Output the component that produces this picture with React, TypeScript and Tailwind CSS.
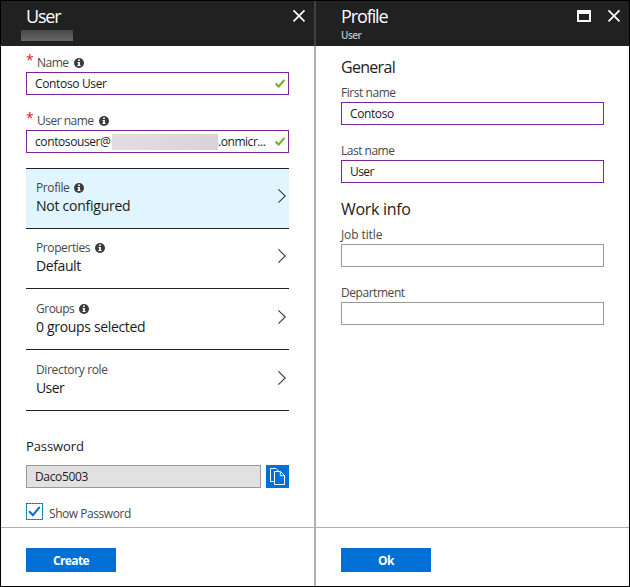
import type { ReactNode } from "react";

function Info() {
  return (
    <svg width="10" height="10" viewBox="0 0 10 10" className="shrink-0">
      <circle cx="5" cy="5" r="5" fill="#3b3b3b" />
      <path d="M4.1 1.6h1.8v1.5H4.1zM3.5 4h2.4v3.1h.7v1H3.4v-1h.7V5h-.6z" fill="#fff" />
    </svg>
  );
}

function Close() {
  return (
    <svg width="14" height="14" viewBox="0 0 14 14" className="block">
      <path d="M1.5 2.3l11 11M12.5 2.3l-11 11" stroke="#fff" strokeWidth="1.7" fill="none" />
    </svg>
  );
}

function Maximize() {
  return (
    <svg width="14" height="12" viewBox="0 0 14 12" className="block">
      <path d="M0 0h14v12H0zM2 4v6h10V4z" fill="#fff" fillRule="evenodd" />
    </svg>
  );
}

function Valid() {
  return (
    <svg width="10" height="9" viewBox="0 0 10 9" className="ml-auto shrink-0">
      <path d="M.7 4.6l3 3L9.3.9" stroke="#76b41b" strokeWidth="2.1" fill="none" />
    </svg>
  );
}

function Chevron() {
  return (
    <svg width="8" height="14" viewBox="0 0 8 14" className="shrink-0">
      <path d="M.4.4L7.3 7 .4 13.6" stroke="#333" strokeWidth="1.1" fill="none" />
    </svg>
  );
}

function CopyIcon() {
  return (
    <svg width="17" height="19" viewBox="0 0 17 19">
      <path d="M5 14.5H1.5v-13h5.5l3 3" stroke="#fff" strokeWidth="1" fill="none" />
      <path d="M5.5 4.5h6l4 4v9h-10z" stroke="#fff" strokeWidth="1" fill="#006fd6" />
      <path d="M11.3 4.5v4.2h4.2" stroke="#fff" strokeWidth="1" fill="none" />
    </svg>
  );
}

function Label({ children, info, required, tracking }: { children: ReactNode; info?: boolean; required?: boolean; tracking: string }) {
  return (
    <div className="flex h-4 items-center text-[12px] leading-4 text-[#484848]">
      {required && <span className="w-[11px] pb-[6px] text-[14px] leading-4 text-[#e81123]">*</span>}
      <span className={tracking}>{children}</span>
      {info && <span className="ml-[5px]"><Info /></span>}
    </div>
  );
}

function Field({ children, filled }: { children?: ReactNode; filled?: boolean }) {
  return (
    <div className={`flex h-[23px] w-[263px] items-center border bg-white pr-[3px] pl-2 text-[12px] text-[#1b1b1b] ${filled ? "border-[#7b259b]" : "border-[#999]"}`}>
      {children}
    </div>
  );
}

function Row({ label, value, info, selected, height, lt, vt }: { label: string; value: string; info?: boolean; selected?: boolean; height: string; lt: string; vt: string }) {
  return (
    <div className={`flex items-start border-b border-[#222] pr-[3px] pl-[10px] ${height} ${selected ? "bg-[#e0f5fd]" : ""}`}>
      <div className="flex flex-1 flex-col">
        <Label info={info} tracking={lt}>{label}</Label>
        <div className={`h-5 text-[14px] leading-5 text-[#1b1b1b] ${vt}`}>{value}</div>
      </div>
      <div className="pt-[9px]"><Chevron /></div>
    </div>
  );
}

function Footer({ children }: { children: string }) {
  return (
    <div className="mt-auto h-[59px] border-t border-[#b0b0b0] pt-5 pl-[25px]">
      <button className="block h-6 w-[90px] bg-[#006fd6] text-[12px] leading-[26px] font-bold tracking-[-0.6px] text-white">{children}</button>
    </div>
  );
}

export default function App() {
  return (
    <div className="flex h-[587px] w-[630px] overflow-hidden border border-black bg-white font-['Open_Sans','Noto_Sans',sans-serif]">
      <section className="flex w-[313px] flex-col">
        <header className="flex h-[45px] justify-between bg-[#212121] pr-2 pl-[25px] text-white">
          <div className="pt-[3px]">
            <h1 className="h-6 text-[18px] leading-6 tracking-[-1.2px]">User</h1>
            <div className="mt-[2px] -ml-[5px] h-[11px] w-[52px] bg-gradient-to-b from-[#484848] to-[#676767]" />
          </div>
          <div className="pt-[7px]"><Close /></div>
        </header>
        <div className="w-[288px] pl-[25px]">
          <div className="mt-[9px]"><Label info required tracking="tracking-[-0.5px]">Name</Label></div>
          <div className="mt-[1px]"><Field filled><span className="tracking-[-0.35px]">Contoso User</span><Valid /></Field></div>
          <div className="mt-[18px]"><Label info required tracking="tracking-[-0.5px]">User name</Label></div>
          <div className="mt-[1px]">
            <Field filled>
              <span className="w-[77px] tracking-[-0.4px]">contosouser@</span>
              <span className="h-4 w-[106px] bg-gradient-to-r from-[#e2dfe4] to-[#d7d3d9]" />
              <span className="tracking-[-0.45px]">.onmicr...</span>
              <Valid />
            </Field>
          </div>
          <div className="mt-[15px] border-t border-[#222]">
            <Row label="Profile" value="Not configured" info selected height="h-[60px] pt-[11px]" lt="tracking-[-0.4px]" vt="tracking-[-0.25px]" />
            <Row label="Properties" value="Default" info height="h-[60px] pt-[11px]" lt="tracking-[-0.4px]" vt="tracking-[-0.4px]" />
            <Row label="Groups" value="0 groups selected" info height="h-[61px] pt-[12px]" lt="tracking-[-0.5px]" vt="tracking-[-0.33px]" />
            <Row label="Directory role" value="User" height="h-[61px] pt-[12px]" lt="tracking-[-0.35px]" vt="tracking-[-0.6px]" />
          </div>
          <div className="mt-[25px] h-5 text-[13px] leading-5 tracking-[-0.1px] text-[#1b1b1b]">Password</div>
          <div className="mt-[9px] flex gap-[5px]">
            <div className="flex h-[23px] w-[235px] items-center border border-[#999] bg-[#e1e1e1] pl-2 text-[12px] tracking-[-0.35px] text-[#222]">Daco5003</div>
            <button className="flex h-[23px] w-[23px] items-center justify-center bg-[#006fd6]"><CopyIcon /></button>
          </div>
          <div className="mt-[15px] flex h-[17px]">
            <svg width="17" height="17" viewBox="0 0 17 17">
              <rect x=".5" y=".5" width="16" height="16" fill="#fff" stroke="#1fb3f0" />
              <rect x=".5" y=".5" width="16" height="16" fill="none" stroke="#17364d" strokeDasharray="1 2" />
              <path d="M3.2 8.2l3.7 4L13.7 4" stroke="#006fd6" strokeWidth="2" fill="none" />
            </svg>
            <span className="mt-[3px] ml-[6px] text-[12px] leading-4 tracking-[-0.45px] text-[#484848]">Show Password</span>
          </div>
        </div>
        <Footer>Create</Footer>
      </section>
      <div className="w-[2px] bg-[#b0b0b0]"><div className="h-[45px] bg-[#404040]" /></div>
      <section className="flex w-[313px] flex-col">
        <header className="flex h-[45px] bg-[#212121] pr-2 pl-[25px] text-white">
          <div className="flex-1 pt-[3px]">
            <h1 className="h-6 text-[18px] leading-6 tracking-[-1.1px]">Profile</h1>
            <div className="mt-[1px] h-3 text-[10px] leading-3 font-semibold tracking-[-0.5px] text-[#c0c0c0]">User</div>
          </div>
          <div className="pt-[9px] pr-4"><Maximize /></div>
          <div className="pt-[7px]"><Close /></div>
        </header>
        <div className="w-[288px] pl-[25px]">
          <h2 className="mt-[9px] h-6 text-[16px] leading-6 tracking-[-0.7px] text-[#222]">General</h2>
          <div className="mt-[6px]"><Label tracking="tracking-[-0.45px]">First name</Label></div>
          <div className="mt-[1px]"><Field filled><span className="tracking-[-0.4px]">Contoso</span></Field></div>
          <div className="mt-[18px]"><Label tracking="tracking-[-0.5px]">Last name</Label></div>
          <div className="mt-[1px]"><Field filled><span className="tracking-[-0.6px]">User</span></Field></div>
          <h2 className="mt-[14px] h-6 text-[16px] leading-6 tracking-[-0.3px] text-[#222]">Work info</h2>
          <div className="mt-[6px]"><Label tracking="tracking-[-0.1px]">Job title</Label></div>
          <div className="mt-[1px]"><Field /></div>
          <div className="mt-[18px]"><Label tracking="tracking-[-0.45px]">Department</Label></div>
          <div className="mt-[1px]"><Field /></div>
        </div>
        <Footer>Ok</Footer>
      </section>
    </div>
  );
}
